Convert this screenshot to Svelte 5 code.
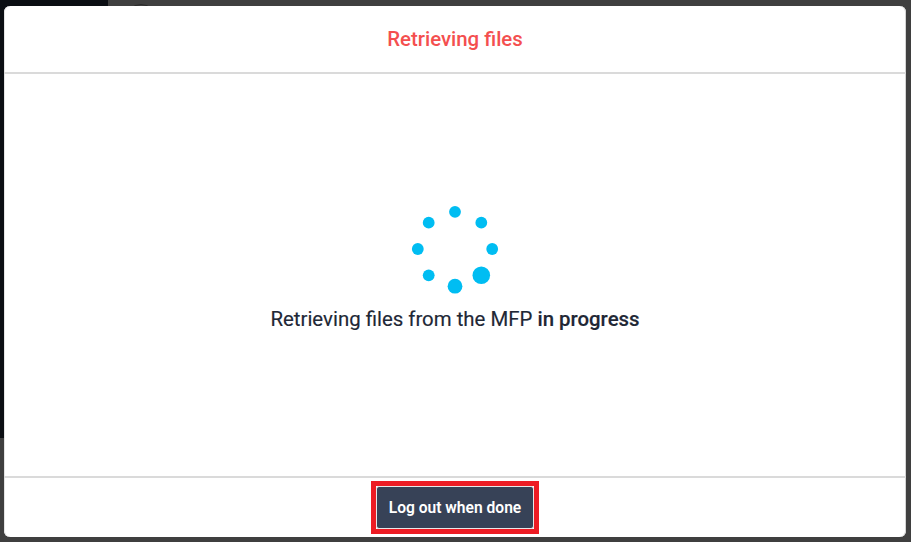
<script lang="ts">
	const cx = 45;
	const cy = 45;
	const orbit = 37.2;
	// sizes go clockwise from the top dot, the big one is the spinner head
	const radii = [5.9, 5.9, 5.9, 8.8, 7.4, 5.9, 5.9, 5.9];
	const dots = radii.map((r, i) => {
		const angle = (i * Math.PI) / 4;
		return { x: cx + orbit * Math.sin(angle), y: cy - orbit * Math.cos(angle), r };
	});
</script>

<div class="page">
	<div class="backdrop">
		<div class="sidebar"></div>
		<div class="avatar"></div>
	</div>

	<div class="modal" role="dialog" aria-labelledby="modal-title">
		<header class="modal-header">
			<h1 id="modal-title">Retrieving files</h1>
		</header>

		<main class="modal-body">
			<svg class="spinner" viewBox="0 0 90 90" width="90" height="90" aria-hidden="true">
				{#each dots as dot}
					<circle cx={dot.x} cy={dot.y} r={dot.r} />
				{/each}
			</svg>
			<p>Retrieving files from the MFP <strong>in progress</strong></p>
		</main>

		<footer class="modal-footer">
			<div class="highlight">
				<button type="button">Log out when done</button>
			</div>
		</footer>
	</div>
</div>

<style>
	:global(body) {
		background: #3f3f3f;
	}

	.page {
		position: relative;
		width: 911px;
		height: 542px;
		overflow: hidden;
		box-sizing: border-box;
		padding: 6px 5px 5px 4px;
		background: #3f3f3f;
		font-family: Roboto, 'Liberation Sans', sans-serif;
	}

	.backdrop {
		position: absolute;
		inset: 0;
	}

	.sidebar {
		width: 108px;
		height: 438px;
		background: #0b0e13;
	}

	.avatar {
		position: absolute;
		left: 125px;
		top: 4px;
		width: 30px;
		height: 30px;
		border: 1px solid #2a2a2a;
		border-radius: 50%;
	}

	.modal {
		position: relative;
		display: flex;
		flex-direction: column;
		height: 100%;
		background: #fff;
		border-radius: 6px;
		box-shadow: inset -1px 0 0 #d4d4d4, inset 1px 0 0 #e4e4e4;
	}

	.modal-header {
		flex: none;
		height: 66px;
		display: flex;
		align-items: center;
		justify-content: center;
		border-bottom: 2px solid #dadada;
	}

	h1 {
		margin: 0;
		font-size: 20.4px;
		font-weight: 500;
		color: #f44f4f;
	}

	.modal-body {
		flex: 1;
		display: flex;
		flex-direction: column;
		align-items: center;
		padding-top: 130px;
		box-sizing: border-box;
	}

	.spinner {
		display: block;
	}

	.spinner circle {
		fill: #00bdf2;
	}

	p {
		margin: 12px 0 0;
		font-size: 20.4px;
		line-height: 27px;
		color: #212735;
		-webkit-text-stroke: 0.15px #212735;
	}

	strong {
		font-weight: 500;
	}

	.modal-footer {
		flex: none;
		height: 61px;
		display: flex;
		justify-content: center;
		align-items: flex-start;
		padding-top: 3px;
		box-sizing: border-box;
		border-top: 2px solid #dadada;
	}

	.highlight {
		border: 5px solid #ed1c24;
		line-height: 0;
	}

	button {
		width: 158px;
		height: 43px;
		padding: 0;
		background: #374257;
		color: #fff;
		border: 1px solid #e8e8e8;
		outline: 0;
		border-radius: 3px;
		font-family: inherit;
		font-size: 15.6px;
		font-weight: 600;
		cursor: pointer;
	}
</style>
